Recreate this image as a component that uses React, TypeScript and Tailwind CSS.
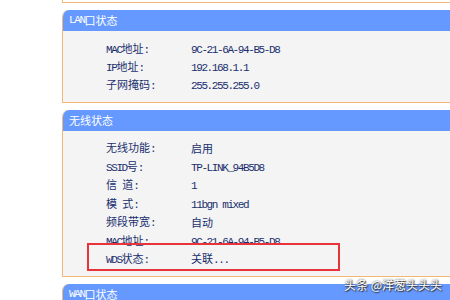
import React from "react";

type Row = { label: string; value: string; boxed?: boolean };

const lanRows: Row[] = [
  { label: "MAC地址:", value: "9C-21-6A-94-B5-D8" },
  { label: "IP地址:", value: "192.168.1.1" },
  { label: "子网掩码:", value: "255.255.255.0" },
];

const wlanRows: Row[] = [
  { label: "无线功能:", value: "启用" },
  { label: "SSID号:", value: "TP-LINK_94B5D8" },
  { label: "信 道:", value: "1" },
  { label: "模 式:", value: "11bgn mixed" },
  { label: "频段带宽:", value: "自动" },
  { label: "MAC地址:", value: "9C-21-6A-94-B5-D8" },
  { label: "WDS状态:", value: "关联...", boxed: true },
];

// half-width latin like the old SimSun router pages
function Mixed({ text }: { text: string }) {
  const runs = text.match(/[\x00-\x7f]+|[^\x00-\x7f]+/g) ?? [];
  return (
    <>
      {runs.map((r, i) =>
        /^[\x00-\x7f]/.test(r) ? (
          <span
            key={i}
            className="tracking-[-1.4px] whitespace-pre"
            style={{ fontFamily: '"Liberation Mono", monospace' }}
          >
            {r}
          </span>
        ) : (
          <span key={i}>{r}</span>
        )
      )}
    </>
  );
}

function StatusRow({ row, h }: { row: Row; h: string }) {
  return (
    <div className={`relative flex items-center ${h}`}>
      <span className="w-[85px] shrink-0 pl-[43px] box-content">
        <Mixed text={row.label} />
      </span>
      <span>
        <Mixed text={row.value} />
      </span>
      {row.boxed && (
        <div className="absolute left-[24px] top-[-7px] h-[28px] w-[253px] border-2 border-[#e8333a]" />
      )}
    </div>
  );
}

function Panel({
  title,
  rows,
  rowH,
  padT,
  padB,
}: {
  title: string;
  rows: Row[];
  rowH: string;
  padT: string;
  padB: string;
}) {
  return (
    <div className="border-l border-b border-[#f3b878] rounded-tl-[7px] overflow-hidden bg-[#f4f4f4]">
      <div className="h-[21px] bg-[#6699ff] pl-[6px] flex items-center text-white">
        <Mixed text={title} />
      </div>
      <div className={`${padT} ${padB}`}>
        {rows.map((r, i) => (
          <StatusRow key={i} row={r} h={rowH} />
        ))}
      </div>
    </div>
  );
}

export default function App() {
  return (
    <div
      className="relative w-[450px] h-[300px] overflow-hidden bg-white text-[11px] text-[#1a2f6e]"
      style={{ fontFamily: '"Noto Sans CJK SC", "DejaVu Sans", sans-serif' }}
    >
      <div className="ml-[62px] w-[420px] flex flex-col gap-[7px]">
        <div className="h-[3px] border-l border-b border-[#f3b878]" />
        <Panel title="LAN口状态" rows={lanRows} rowH="h-[18px]" padT="pt-[9px]" padB="pb-[8px]" />
        <Panel title="无线状态" rows={wlanRows} rowH="h-[18.5px]" padT="pt-[8px]" padB="pb-[7px]" />
        <div className="h-[21px] bg-[#6699ff] rounded-tl-[7px] pl-[6px] flex items-center text-white border-l border-[#f3b878]">
          <Mixed text="WAN口状态" />
        </div>
      </div>
      <div
        className="absolute left-[344px] top-[276px] text-[12px] text-white whitespace-nowrap"
        style={{ textShadow: "0 0 2px #333, 1px 1px 1px #333" }}
      >
        头条 @洋葱头头头
      </div>
    </div>
  );
}
